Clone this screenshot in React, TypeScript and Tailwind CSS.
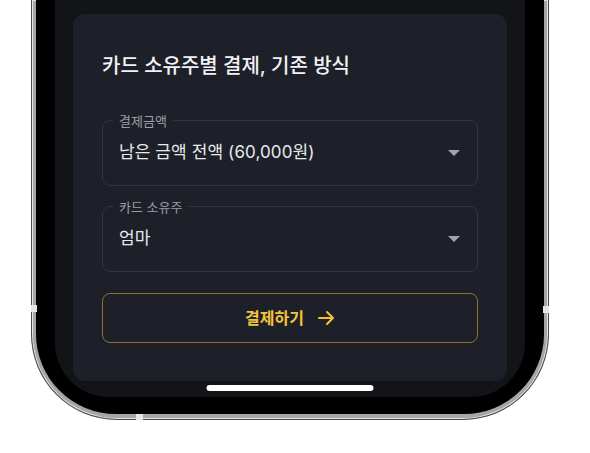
import React from 'react';

const FONT = 'font-["Inter","Noto_Sans_CJK_KR",sans-serif]';

function SelectField({ label, value }: { label: string; value: string }) {
  return (
    <div className="relative h-[66px] rounded-lg border border-[#2f3543] flex items-center pl-[16px] pr-[16px]">
      <span className="absolute left-[10px] top-0 -translate-y-1/2 bg-[#1e2029] px-[6px] text-[13px] leading-none text-[#9a9ea6]">
        {label}
      </span>
      <span className="flex-1 text-[17px] text-[#e8e9ec] tracking-[0.1px]">{value}</span>
      <svg width="12" height="6" viewBox="0 0 12 6" className="mr-[1px]">
        <path d="M0 0h12L6 6z" fill="#a0a4ab" />
      </svg>
    </div>
  );
}

export default function App() {
  return (
    <div className={`w-[590px] h-[453px] bg-white overflow-hidden ${FONT}`}>
      {/* phone frame */}
      <div className="relative ml-[31px] w-[518px] rounded-b-[86px] bg-[#a6a6a6] border-x border-b border-[#4a4a4a] px-[4px] pb-[5px] shadow-[inset_0_0_0_1px_#e4e4e4]">
        <span className="absolute left-[-1px] top-[305px] w-[6px] h-[7px] bg-[#e6e6e2]" />
        <span className="absolute right-[-1px] top-[306px] w-[6px] h-[7px] bg-[#e6e6e2]" />
        <span className="absolute left-[104px] bottom-[-1px] w-[7px] h-[6px] bg-[#e6e6e2]" />
        <div className="rounded-b-[80px] bg-black px-[19px] pb-[17px]">
          {/* screen */}
          <div className="relative rounded-b-[54px] bg-[#131418] pt-[14px] px-[18px] pb-[16px]">
            <div className="rounded-xl bg-[#1e2029] px-[29px] pt-[38px] pb-[38px]">
              <h2 className="text-[20px] leading-[28px] font-medium text-[#f1f2f4]">
                카드 소유주별 결제, 기존 방식
              </h2>
              <div className="mt-[40px] flex flex-col gap-[20px]">
                <SelectField label="결제금액" value="남은 금액 전액 (60,000원)" />
                <SelectField label="카드 소유주" value="엄마" />
              </div>
              <button className="mt-[21px] w-full h-[50px] rounded-lg border border-[#8a7433] flex items-center justify-center gap-[14px] text-[16px] font-semibold text-[#f3c43a]">
                <span>결제하기</span>
                <svg width="17" height="16" viewBox="0 0 17 16" fill="none" stroke="#f3c43a" strokeWidth="2" strokeLinecap="round" strokeLinejoin="round">
                  <path d="M1 8h14M9 2l6 6-6 6" />
                </svg>
              </button>
            </div>
            <div className="absolute left-1/2 -translate-x-1/2 bottom-[6px] w-[167px] h-[6px] rounded-full bg-white" />
          </div>
        </div>
      </div>
    </div>
  );
}
